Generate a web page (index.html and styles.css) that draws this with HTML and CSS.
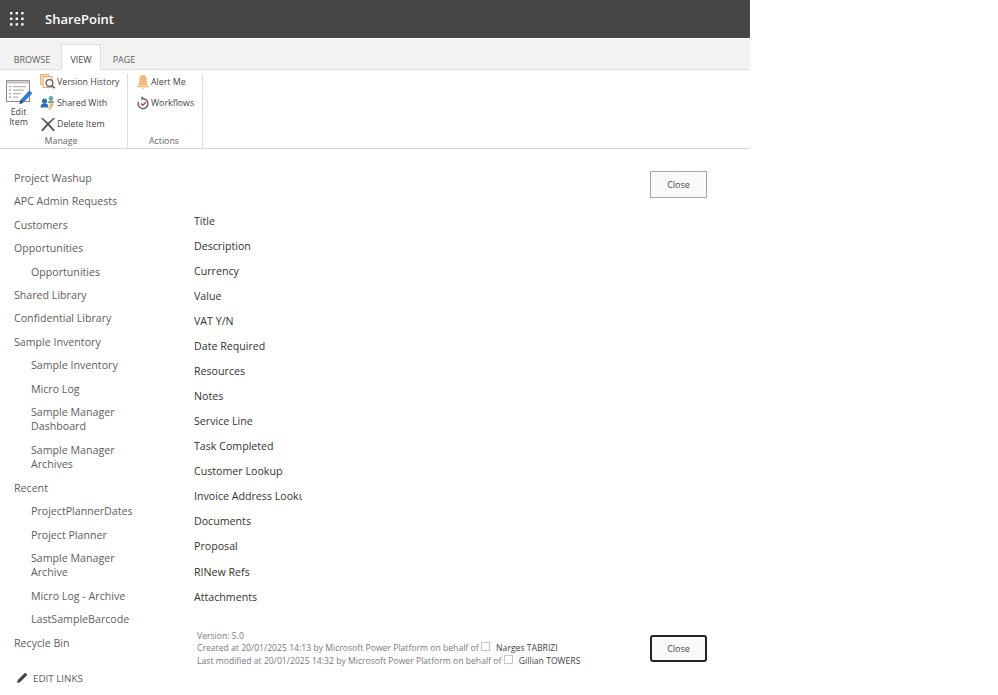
FILE: index.html
```html
<!DOCTYPE html>
<html lang="en">
<head>
<meta charset="utf-8">
<title>SharePoint</title>
<link rel="stylesheet" href="styles.css">
</head>
<body>
<div class="page">
  <header class="suitebar">
    <svg class="waffle" width="14" height="14" viewBox="0 0 14 14"><g fill="#fff"><rect x="0" y="0" width="2.4" height="2.4"/><rect x="5.6" y="0" width="2.4" height="2.4"/><rect x="11.2" y="0" width="2.4" height="2.4"/><rect x="0" y="5.6" width="2.4" height="2.4"/><rect x="5.6" y="5.6" width="2.4" height="2.4"/><rect x="11.2" y="5.6" width="2.4" height="2.4"/><rect x="0" y="11.2" width="2.4" height="2.4"/><rect x="5.6" y="11.2" width="2.4" height="2.4"/><rect x="11.2" y="11.2" width="2.4" height="2.4"/></g></svg>
    <span class="brand">SharePoint</span>
  </header>
  <nav class="tabs">
    <span class="tab tab-browse">BROWSE</span>
    <span class="tab tab-active">VIEW</span>
    <span class="tab tab-page">PAGE</span>
  </nav>
  <section class="ribbon">
    <div class="group group-manage">
      <div class="group-body">
        <div class="big-btn">
          <svg width="27" height="27" viewBox="0 0 27 27"><rect x="0.5" y="1.500" width="23" height="21" fill="#fff" stroke="#8a8886"/><rect x="0.5" y="1.500" width="23" height="2.500" fill="#d2d0ce" stroke="#8a8886" stroke-width=".5"/><g fill="#6ba5d8"><rect x="3" y="7" width="2" height="1.200"/><rect x="3" y="10.500" width="2" height="1.200"/><rect x="3" y="14" width="2" height="1.200"/><rect x="3" y="17.500" width="2" height="1.200"/></g><g fill="#b3b0ad"><rect x="7" y="7" width="13" height="1.200"/><rect x="7" y="10.500" width="11" height="1.200"/><rect x="7" y="14" width="8" height="1.200"/><rect x="7" y="17.500" width="5" height="1.200"/></g><path d="M13.500 25l1.200-4.300L23.500 11.300l2.800 2.900-9.200 9.500z" fill="#2b7cd3"/><path d="M13.500 25l1.200-4.300 2.400 3z" fill="#484644"/></svg>
          <span class="big-label">Edit<br>Item</span>
        </div>
        <div class="btn-col">
          <div class="small-btn">
            <svg width="16" height="16" viewBox="0 0 16 16"><rect x="0.500" y="0.500" width="8" height="10" fill="#f8e0c4" stroke="#e8b27a"/><rect x="3" y="2.500" width="9" height="11" fill="#fbeedd" stroke="#e0ab72"/><circle cx="9.500" cy="9" r="3.300" fill="#fff" stroke="#605e5c" stroke-width="1.200"/><path d="M12 11.500l2.800 2.800" stroke="#605e5c" stroke-width="1.600"/></svg>
            <span>Version History</span>
          </div>
          <div class="small-btn">
            <svg width="16" height="16" viewBox="0 0 16 16"><circle cx="4.500" cy="6" r="2.500" fill="#2f6db5"/><path d="M0.500 12.500c0-2.800 1.600-4.200 4-4.200s4 1.400 4 4.200z" fill="#2f6db5"/><circle cx="11" cy="3.300" r="2.300" fill="#6aa898"/><path d="M7.500 8c.5-2 2-2.800 3.500-2.800s3 .8 3.500 2.800z" fill="#6aa898"/><circle cx="11.500" cy="10" r="2" fill="#f2b56b"/><path d="M10.500 11L8 14.800h2l2.300-3.200z" fill="#f2b56b"/></svg>
            <span>Shared With</span>
          </div>
          <div class="small-btn">
            <svg width="16" height="16" viewBox="0 0 16 16"><path d="M1.500 2h1.300L8 6.800 13.200 2h1.300v.8L9.300 8l5.200 5.800V15H13L8 9.500 3 15H1.500v-1.200L6.700 8 1.500 2.800z" fill="#5a5856"/></svg>
            <span>Delete Item</span>
          </div>
        </div>
      </div>
      <div class="group-title">Manage</div>
    </div>
    <div class="group group-actions">
      <div class="group-body">
        <div class="btn-col">
          <div class="small-btn">
            <svg width="14" height="16" viewBox="0 0 14 16"><path d="M7 1c2.800 0 3.700 2.200 3.700 4.500V9l1.800 2.500h-11L3.300 9V5.500C3.300 3.200 4.200 1 7 1z" fill="#f0b87a"/><rect x="1" y="12" width="12" height="1.200" fill="#f0b87a"/><path d="M5.500 13.800h3L7 15z" fill="#e8a868"/></svg>
            <span>Alert Me</span>
          </div>
          <div class="small-btn">
            <svg width="14" height="16" viewBox="0 0 14 16"><path d="M7.500 3.800a4.900 4.900 0 1 1-5 3" fill="none" stroke="#605e5c" stroke-width="1.400"/><path d="M5.500 1l3 2.600-3 1.600z" fill="#605e5c"/><path d="M5 8.500l1.800 1.800 2.900-3.100" fill="none" stroke="#d13438" stroke-width="1.300"/></svg>
            <span>Workflows</span>
          </div>
        </div>
      </div>
      <div class="group-title">Actions</div>
    </div>
  </section>
  <div class="content">
    <aside class="sidenav">
      <ul class="nav-list">
        <li class="nav-item">Project Washup</li>
        <li class="nav-item">APC Admin Requests</li>
        <li class="nav-item">Customers</li>
        <li class="nav-item">Opportunities</li>
        <li class="nav-item nav-sub">Opportunities</li>
        <li class="nav-item">Shared Library</li>
        <li class="nav-item">Confidential Library</li>
        <li class="nav-item">Sample Inventory</li>
        <li class="nav-item nav-sub">Sample Inventory</li>
        <li class="nav-item nav-sub">Micro Log</li>
        <li class="nav-item nav-sub">Sample Manager Dashboard</li>
        <li class="nav-item nav-sub">Sample Manager Archives</li>
        <li class="nav-item">Recent</li>
        <li class="nav-item nav-sub">ProjectPlannerDates</li>
        <li class="nav-item nav-sub">Project Planner</li>
        <li class="nav-item nav-sub">Sample Manager Archive</li>
        <li class="nav-item nav-sub">Micro Log - Archive</li>
        <li class="nav-item nav-sub">LastSampleBarcode</li>
        <li class="nav-item">Recycle Bin</li>
      </ul>
      <div class="edit-links">
        <svg width="12" height="12" viewBox="0 0 12 12"><path d="M1 11l.8-3L8.500 1.300c.4-.4 1-.4 1.400 0l.8.800c.4.400.4 1 0 1.400L4 10.200z" fill="#484644"/></svg>
        <span>EDIT LINKS</span>
      </div>
    </aside>
    <main class="form">
      <div class="form-top"><button class="close-btn">Close</button></div>
      <div class="field"><span class="label">Title</span></div>
      <div class="field"><span class="label">Description</span></div>
      <div class="field"><span class="label">Currency</span></div>
      <div class="field"><span class="label">Value</span></div>
      <div class="field"><span class="label">VAT Y/N</span></div>
      <div class="field"><span class="label">Date Required</span></div>
      <div class="field"><span class="label">Resources</span></div>
      <div class="field"><span class="label">Notes</span></div>
      <div class="field"><span class="label">Service Line</span></div>
      <div class="field"><span class="label">Task Completed</span></div>
      <div class="field"><span class="label">Customer Lookup</span></div>
      <div class="field"><span class="label">Invoice Address Lookup</span></div>
      <div class="field"><span class="label">Documents</span></div>
      <div class="field"><span class="label">Proposal</span></div>
      <div class="field"><span class="label">RINew Refs</span></div>
      <div class="field"><span class="label">Attachments</span></div>
      <div class="form-foot">
        <div class="meta">
          <div>Version: 5.0</div>
          <div>Created at 20/01/2025 14:13 by Microsoft Power Platform on behalf of <span class="presence"></span> <span class="person">Narges TABRIZI</span></div>
          <div>Last modified at 20/01/2025 14:32 by Microsoft Power Platform on behalf of <span class="presence"></span> <span class="person">Gillian TOWERS</span></div>
        </div>
        <button class="close-btn close-focus">Close</button>
      </div>
    </main>
  </div>
</div>
</body>
</html>
```
FILE: styles.css
```css
* { box-sizing: border-box; }
html, body { margin: 0; padding: 0; background: #fff; }
body { font-family: "Open Sans", "Noto Sans", sans-serif; color: #333; overflow: hidden; height: 695px; }
.page { width: 750px; }
.suitebar { height: 38px; background: #484644; display: flex; align-items: center; padding-left: 10px; }
.waffle { flex: none; }
.brand { margin-left: 21px; color: #fff; font-size: 13px; font-weight: 600; }
.tabs { margin-top: 1px; height: 31px; background: #f3f2f1; border-bottom: 1px solid #e1dfdd; display: flex; padding: 5px 0 0 8px; align-items: stretch; }
.tab { padding-top: 9px; text-align: center; font-size: 9px; color: #605e5c; white-space: nowrap; }
.tab-browse { width: 48px; margin-right: 5px; }
.tab-active { background: #fff; border: 1px solid #e1dfdd; border-bottom: 1px solid #fff; height: 26px; padding-top: 8px; width: 40px; color: #444; }
.tab-page { width: 46px; }
.ribbon { height: 79px; border-bottom: 1px solid #d9d7d5; display: flex; padding-top: 4px; }
.group { display: flex; flex-direction: column; border-right: 1px solid #e1dfdd; }
.group-manage { width: 128px; }
.group-actions { width: 75px; }
.group-body { flex: 1; display: flex; }
.group-title { height: 15px; text-align: center; font-size: 8.800px; color: #666; line-height: 16px; }
.group-manage .group-title { padding-right: 5px; }
.group-actions .group-title { padding-right: 2px; }
.big-btn { width: 40px; padding: 5px 0 0 6px; display: flex; flex-direction: column; }
.big-label { font-size: 8.800px; line-height: 9.500px; width: 25px; text-align: center; color: #444; margin-top: 2px; }
.btn-col { display: flex; flex-direction: column; gap: 5px; }
.small-btn { height: 16px; display: flex; align-items: center; gap: 1px; font-size: 8.800px; color: #444; white-space: nowrap; }
.group-actions .btn-col { padding-left: 8px; }
.content { display: flex; }
.sidenav { width: 181px; flex: none; padding: 17.700px 0 0 14px; }
.nav-list { list-style: none; margin: 0; padding: 0; }
.nav-item { font-size: 10.650px; line-height: 14.500px; color: #605e5c; padding: 4.400px 0 4.500px 0; width: 130px; }
.nav-sub { padding-left: 17px; }
.edit-links { display: flex; align-items: center; gap: 5px; margin-top: 17px; padding-left: 2px; font-size: 9.800px; color: #605e5c; }
.form { width: 526px; padding: 0 0 0 13px; }
.form-top { display: flex; justify-content: flex-end; padding-top: 22px; height: 59.100px; }
.close-btn { width: 57px; height: 27px; background: #faf9f8; border: 1px solid #a6a6a6; font-family: inherit; font-size: 9px; color: #444; padding: 0; }
.field { height: 25.070px; display: flex; align-items: center; }
.label { width: 108px; overflow: hidden; white-space: nowrap; font-size: 10.650px; color: #333; }
.form-foot { display: flex; justify-content: space-between; align-items: flex-start; margin-top: 20.500px; padding-left: 3px; }
.meta { font-size: 8.650px; line-height: 11.700px; color: #7a7a7a; padding-top: 1px; }
.presence { display: inline-block; width: 9px; height: 9px; border: 1px solid #c8c6c4; }
.person { color: #444; margin-left: 4px; }
.close-focus { border: 2px solid #222; border-radius: 3px; margin-top: 5px; }
```
